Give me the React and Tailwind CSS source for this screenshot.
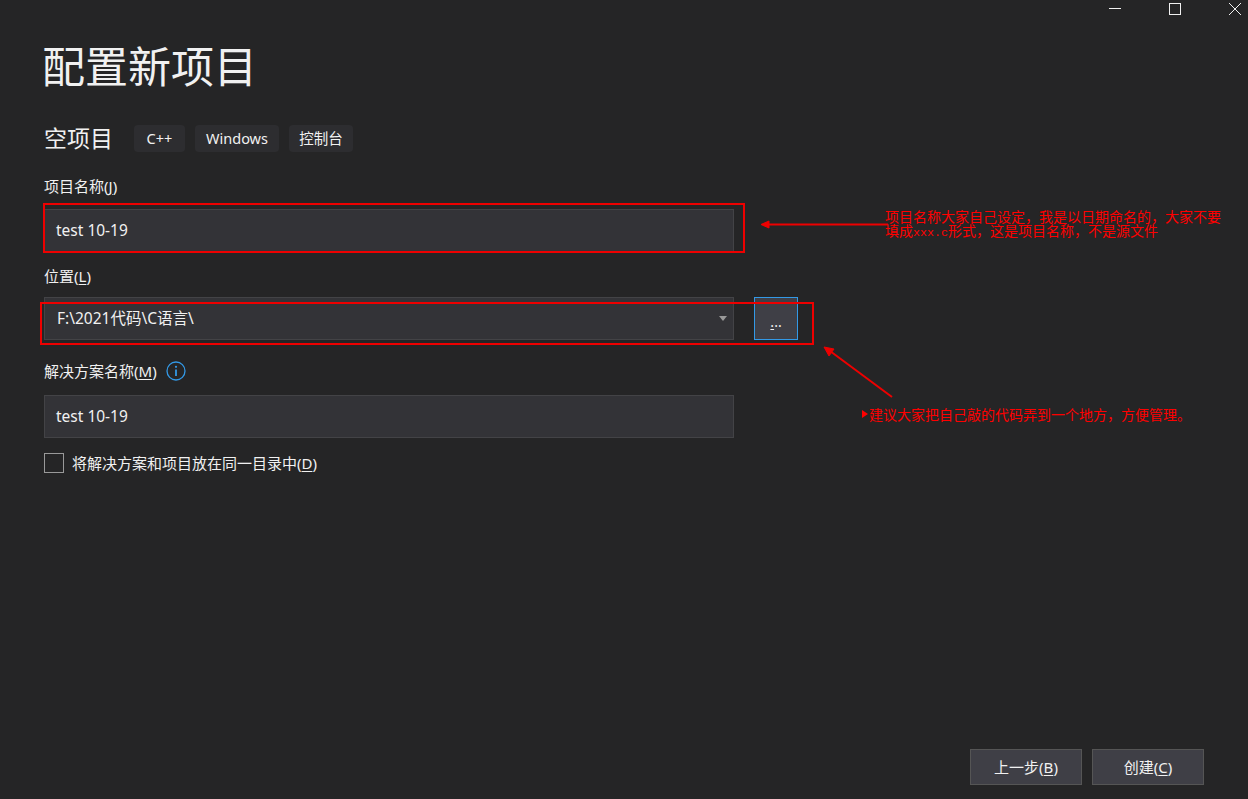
function U({ children }) {
  return <span className="underline underline-offset-2">{children}</span>;
}

function Tag({ children, className = "" }) {
  return (
    <span className={`h-[27px] flex items-center justify-center rounded-[4px] bg-[#2d2d30] text-[14.5px] text-[#f1f1f1] ${className}`}>
      {children}
    </span>
  );
}

function Field({ children, className = "" }) {
  return (
    <div className={`h-[43px] w-[690px] flex items-center justify-between pl-[11px] pr-[6px] bg-[#333337] border border-[#434346] text-[15.5px] text-[#f1f1f1] ${className}`}>
      {children}
    </div>
  );
}

function FootButton({ children }) {
  return (
    <button className="w-[112px] h-[36px] flex items-center justify-center bg-[#3f3f46] border border-[#555555] text-[15px] text-[#f1f1f1]">
      {children}
    </button>
  );
}

export default function App() {
  return (
    <div className='relative h-[799px] w-[1248px] overflow-hidden flex flex-col bg-[#252526] text-[#f1f1f1] [font-family:"Noto_Sans","Noto_Sans_CJK_SC",sans-serif]'>
      {/* window controls */}
      <div className="h-[18px] flex items-start justify-end pt-[3px] pr-[7px] gap-[48px]">
        <svg width="12" height="12" viewBox="0 0 12 12" className="block"><path d="M0 5.5H12" stroke="#f1f1f1" strokeWidth="1" /></svg>
        <svg width="12" height="12" viewBox="0 0 12 12" className="block"><rect x="0.5" y="0.5" width="11" height="11" fill="none" stroke="#f1f1f1" strokeWidth="1" /></svg>
        <svg width="12" height="12" viewBox="0 0 12 12" className="block"><path d="M0 0L12 12M12 0L0 12" stroke="#f1f1f1" strokeWidth="1" /></svg>
      </div>

      <div className="pl-[44px] flex flex-col flex-1">
        <h1 className="h-[97px] -ml-[2px] flex items-center text-[43px] leading-none font-normal text-[#f1f1f1]">配置新项目</h1>

        <div className="h-[27px] mt-[10px] flex items-center">
          <span className="text-[23px] leading-none mr-[22px] w-[68px] whitespace-nowrap">空项目</span>
          <div className="flex gap-[10px]">
            <Tag className="w-[51px]">C++</Tag>
            <Tag className="w-[84px]">Windows</Tag>
            <Tag className="w-[64px]">控制台</Tag>
          </div>
        </div>

        <label className="mt-[23px] h-[22px] flex items-center text-[15px]">项目名称(<U>J</U>)</label>
        <div className="mt-[12px]"><Field>test 10-19</Field></div>

        <label className="mt-[13px] h-[22px] flex items-center text-[15px]">位置(<U>L</U>)</label>
        <div className="mt-[10px] flex gap-[20px]">
          <Field className="!pl-[12px]">
            <span>F:\2021代码\C语言\</span>
            <svg width="8" height="5" viewBox="0 0 8 5"><path d="M0 0H8L4 5Z" fill="#999999" /></svg>
          </Field>
          <button className="w-[44px] h-[43px] bg-[#3f3f46] border border-[#3399e6] text-[14px] text-[#f1f1f1] flex items-center justify-center pt-[6px]">
            <U>.</U>..
          </button>
        </div>

        <div className="mt-[20px] h-[22px] flex items-center text-[15px] gap-[9px]">
          <span>解决方案名称(<U>M</U>)</span>
          <svg width="20" height="20" viewBox="0 0 20 20">
            <circle cx="10" cy="10" r="9" fill="none" stroke="#3399e6" strokeWidth="1.300" />
            <path d="M10 8.500V15" stroke="#3399e6" strokeWidth="1.800" />
            <circle cx="10" cy="5.800" r="1.100" fill="#3399e6" />
          </svg>
        </div>

        <div className="mt-[13px]"><Field>test 10-19</Field></div>

        <div className="mt-[14px] flex items-center gap-[8px] text-[15px]">
          <span className="w-[20px] h-[20px] border border-[#999999]" />
          <span>将解决方案和项目放在同一目录中(<U>D</U>)</span>
        </div>

        <div className="mt-auto pb-[14px] pr-[44px] flex justify-end gap-[10px]">
          <FootButton>上一步(<U>B</U>)</FootButton>
          <FootButton>创建(<U>C</U>)</FootButton>
        </div>
      </div>

      {/* red annotations painted over the screenshot */}
      <div className="absolute left-[43px] top-[203px] w-[702px] h-[50px] border-2 border-[#ee0000]" />
      <div className="absolute left-[40px] top-[302px] w-[774px] h-[43px] border-2 border-[#ee0000]" />
      <svg className="absolute left-0 top-0 pointer-events-none" width="1248" height="799">
        <path d="M888 224.500H768" stroke="#ee0000" strokeWidth="2" />
        <path d="M761 224.500L769 221V228Z" fill="#ee0000" stroke="#ee0000" />
        <path d="M892 397L830 351" stroke="#ee0000" strokeWidth="2" />
        <path d="M824 347L834 349L829 356Z" fill="#ee0000" stroke="#ee0000" />
      </svg>
      <div className='absolute left-[885px] top-[209px] text-[14px] leading-[14px] text-[#ff0000] whitespace-nowrap [font-family:"Noto_Sans_CJK_SC",sans-serif]'>
        <div>项目名称大家自己设定，我是以日期命名的，大家不要</div>
        <div>填成<span className='text-[11.67px] [font-family:"Liberation_Mono",monospace]'>xxx.c</span>形式，这是项目名称，不是源文件</div>
      </div>
      <div className='absolute left-[862px] top-[407px] text-[14px] leading-[14px] text-[#ff0000] whitespace-nowrap flex items-center [font-family:"Noto_Sans_CJK_SC",sans-serif]'>
        <span className="w-0 h-0 border-y-[4px] border-y-transparent border-l-[6px] border-l-[#ff0000] mr-[1px]" />
        <span>建议大家把自己敲的代码弄到一个地方，方便管理。</span>
      </div>
    </div>
  );
}
